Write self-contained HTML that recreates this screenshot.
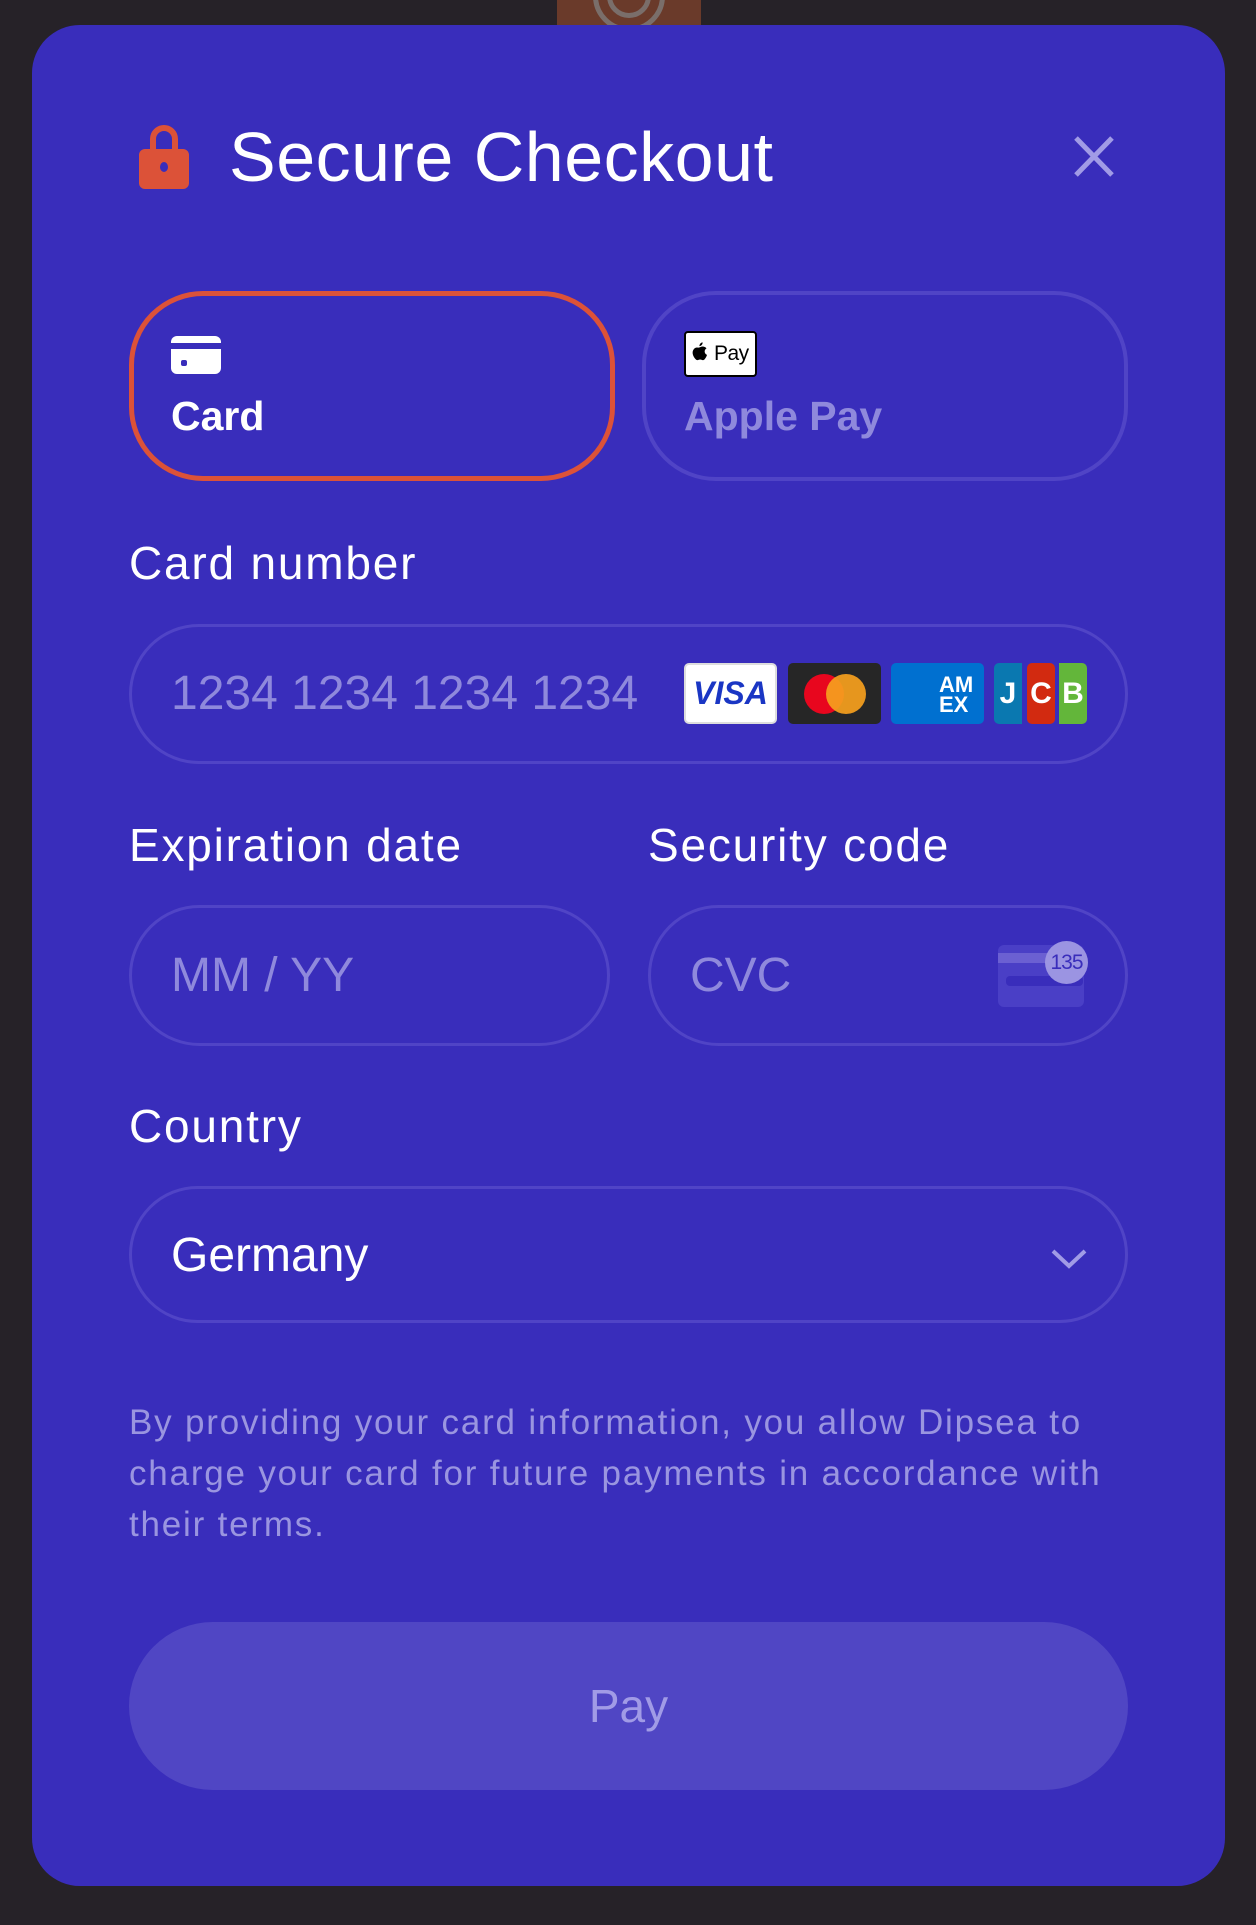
<!DOCTYPE html>
<html><head><meta charset="utf-8"><style>
*{margin:0;padding:0;box-sizing:border-box}
body{width:1256px;height:1925px;background:#262228;font-family:"Liberation Sans",sans-serif;position:relative;overflow:hidden}
.a{position:absolute}
.modal{left:32px;top:25px;width:1193px;height:1861px;background:#392dbb;border-radius:48px}
.lbl{color:#fff;font-size:46px;letter-spacing:1.8px;white-space:nowrap}
.inp{border:3.5px solid #5044c6;border-radius:80px}
.ph{color:#8f89dc;font-size:48px;white-space:nowrap}
</style></head><body>
<div class="a" style="left:557px;top:0;width:144px;height:30px;background:#6a3a2a;overflow:hidden">
<div class="a" style="left:36px;top:-40px;width:72px;height:72px;border:5px solid #7a6e6a;border-radius:50%"></div>
<div class="a" style="left:50px;top:-26px;width:44px;height:44px;border:5px solid #7a6e6a;border-radius:50%"></div>
</div>
<div class="a modal"></div>
<svg class="a" style="left:139px;top:123px" width="50" height="66" viewBox="0 0 50 66"><path d="M14 28V16a11 11 0 0 1 22 0v12" fill="none" stroke="#dc5238" stroke-width="6"/><rect x="0" y="26" width="50" height="40" rx="6" fill="#dc5238"/><ellipse cx="25" cy="44" rx="4" ry="5" fill="#392dbb"/></svg>
<div class="a" style="left:229px;top:117px;color:#fff;font-size:70px;letter-spacing:0.5px;white-space:nowrap">Secure Checkout</div>
<svg class="a" style="left:1073px;top:135px" width="42" height="43"><path d="M3 3L39 40M39 3L3 40" stroke="#a19be6" stroke-width="5"/></svg>
<div class="a" style="left:129px;top:291px;width:486px;height:190px;border:5px solid #dc5238;border-radius:74px"></div>
<svg class="a" style="left:171px;top:336px" width="50" height="38"><rect x="0" y="0" width="50" height="38" rx="6" fill="#fff"/><rect x="0" y="7" width="50" height="6" fill="#392dbb"/><rect x="10" y="24" width="6" height="6" rx="2" fill="#392dbb"/></svg>
<div class="a" style="left:171px;top:393px;color:#fff;font-size:41px;font-weight:bold">Card</div>
<div class="a" style="left:642px;top:291px;width:486px;height:190px;border:4px solid #5044c6;border-radius:74px"></div>
<div class="a" style="left:684px;top:331px;width:73px;height:46px;background:#fff;border:2px solid #000;border-radius:4px;font-size:21px;color:#000;line-height:42px;padding-left:28px;letter-spacing:-0.5px">Pay</div>
<svg class="a" style="left:690px;top:341px" width="18" height="22" viewBox="0 0 20 24"><path d="M10 7C11 7 13 5.5 15 6c1.5.2 2.7 1 3.3 2-3 1.8-2.5 6 .6 7.2-.6 1.8-1.5 3.5-2.6 4.8-1 1.1-2 1.2-3.2.7-1.3-.5-2.4-.5-3.7 0-1.3.5-2.2.4-3.1-.6C3.5 17 2 13 3.5 10 4.5 8 6.2 7 8 7c.8 0 1.3.4 2 .0z" fill="#000"/><path d="M10.5 5.5C10.3 3.5 12 1.5 14 1.3c.2 2-1.5 4-3.5 4.2z" fill="#000"/></svg>
<div class="a" style="left:684px;top:393px;color:#8f89dc;font-size:41px;font-weight:bold">Apple Pay</div>
<div class="a lbl" style="left:129px;top:536px">Card number</div>
<div class="a inp" style="left:129px;top:624px;width:999px;height:140px"></div>
<div class="a ph" style="left:171px;top:666px">1234 1234 1234 1234</div>
<div class="a" style="left:684px;top:663px;width:93px;height:61px;background:#fff;border:2px solid #ddd;border-radius:5px;color:#1a36c4;font-weight:bold;font-style:italic;font-size:32px;text-align:center;line-height:57px">VISA</div>
<div class="a" style="left:788px;top:663px;width:93px;height:61px;background:#262626;border-radius:5px"><div class="a" style="left:16px;top:11px;width:40px;height:40px;border-radius:50%;background:#e8061e"></div><div class="a" style="left:38px;top:11px;width:40px;height:40px;border-radius:50%;background:#f59f1e;opacity:.93"></div></div>
<div class="a" style="left:891px;top:663px;width:93px;height:61px;background:#0070d0;border-radius:5px;color:#fff;font-weight:bold;font-size:22px;line-height:20px;padding:12px 0 0 48px">AM<br>EX</div>
<div class="a" style="left:994px;top:663px;width:28px;height:61px;background:#0a78b0;border-radius:5px 0 0 5px;color:#fff;font-weight:bold;font-size:30px;line-height:61px;text-align:center">J</div>
<div class="a" style="left:1027px;top:663px;width:28px;height:61px;background:#d22a10;border-radius:5px;color:#fff;font-weight:bold;font-size:30px;line-height:61px;text-align:center">C</div>
<div class="a" style="left:1059px;top:663px;width:28px;height:61px;background:#63b63a;border-radius:0 5px 5px 0;color:#fff;font-weight:bold;font-size:30px;line-height:61px;text-align:center">B</div>
<div class="a lbl" style="left:129px;top:818px">Expiration date</div>
<div class="a lbl" style="left:648px;top:818px">Security code</div>
<div class="a inp" style="left:129px;top:905px;width:481px;height:141px"></div>
<div class="a ph" style="left:171px;top:948px">MM / YY</div>
<div class="a inp" style="left:648px;top:905px;width:480px;height:141px"></div>
<div class="a ph" style="left:690px;top:948px">CVC</div>
<div class="a" style="left:998px;top:945px;width:86px;height:62px;background:#4a3fc6;border-radius:6px"><div class="a" style="left:0;top:8px;width:86px;height:10px;background:#6b60d2"></div><div class="a" style="left:8px;top:31px;width:77px;height:10px;background:#392dbb;border-radius:4px"></div></div>
<div class="a" style="left:1045px;top:941px;width:43px;height:43px;border-radius:50%;background:#9b94e2;color:#392dbb;font-size:21px;line-height:43px;text-align:center;letter-spacing:-1px">135</div>
<div class="a lbl" style="left:129px;top:1099px">Country</div>
<div class="a inp" style="left:129px;top:1186px;width:999px;height:137px"></div>
<div class="a" style="left:171px;top:1228px;color:#fff;font-size:48px">Germany</div>
<svg class="a" style="left:1050px;top:1248px" width="38" height="22"><path d="M3 3L19 18L35 3" fill="none" stroke="#a19be6" stroke-width="4"/></svg>
<div class="a" style="left:129px;top:1397px;width:1100px;color:#9a95e0;font-size:35px;letter-spacing:1.8px;line-height:51px;white-space:nowrap">By providing your card information, you allow Dipsea to<br>charge your card for future payments in accordance with<br>their terms.</div>
<div class="a" style="left:129px;top:1622px;width:999px;height:168px;background:#5046c4;border-radius:84px;color:#a19be6;font-size:46px;text-align:center;line-height:168px">Pay</div>
</body></html>
